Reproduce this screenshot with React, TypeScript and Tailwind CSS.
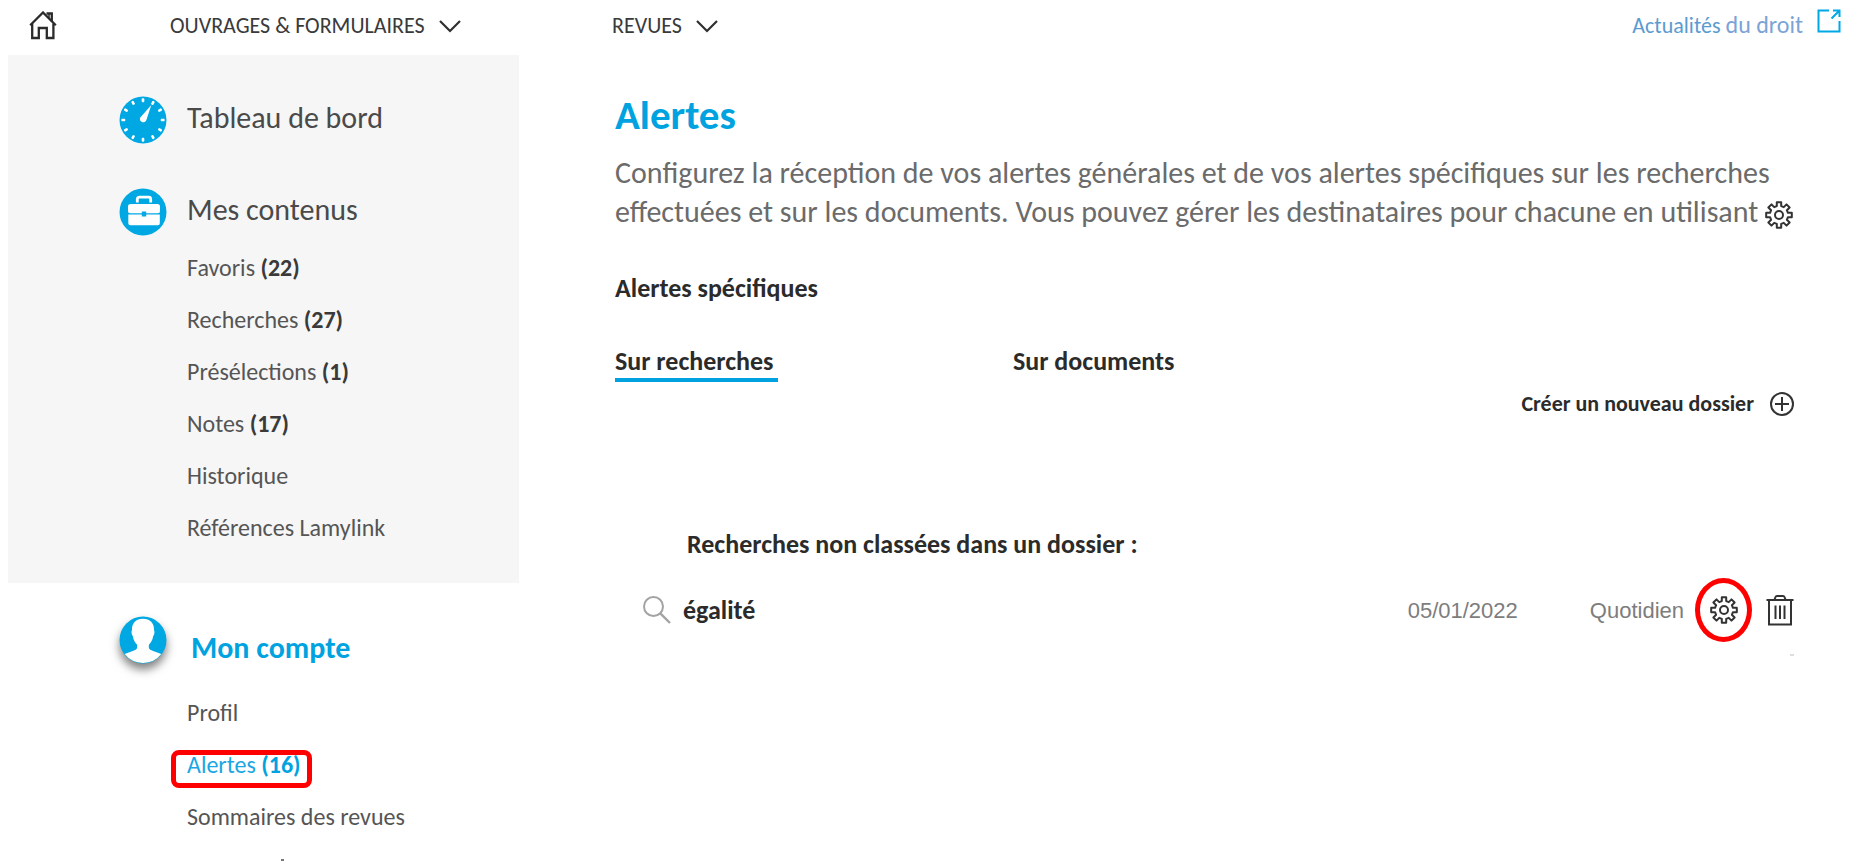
import React from "react";

type Entry = { label: string; count?: number; active?: boolean };

const contents: Entry[] = [
  { label: "Favoris", count: 22 },
  { label: "Recherches", count: 27 },
  { label: "Présélections", count: 1 },
  { label: "Notes", count: 17 },
  { label: "Historique" },
  { label: "Références Lamylink" },
];

const account: Entry[] = [
  { label: "Profil" },
  { label: "Alertes", count: 16, active: true },
  { label: "Sommaires des revues" },
];

/* Outline of an eight-toothed cog centred on 14,14. */
const cogPath =
  Array.from({ length: 8 }, (_, i) => {
    const base = (i * Math.PI) / 4;
    return (
      [
        [9.2, -0.24],
        [13, -0.17],
        [13, 0.17],
        [9.2, 0.24],
      ] as const
    )
      .map(([r, a], k) => {
        const x = 14 + r * Math.sin(base + a);
        const y = 14 - r * Math.cos(base + a);
        return `${i === 0 && k === 0 ? "M" : "L"}${x.toFixed(2)} ${y.toFixed(2)}`;
      })
      .join("");
  }).join("") + "Z";

function Cog({ className = "" }: { className?: string }) {
  return (
    <svg viewBox="0 0 28 28" className={`size-7 ${className}`} fill="none" stroke="#333" strokeWidth="2" strokeLinejoin="round" aria-hidden="true">
      <path d={cogPath} />
      <circle cx="14" cy="14" r="4" />
    </svg>
  );
}

function HomeIcon() {
  return (
    <svg viewBox="0 2 28 30" className="h-[30px] w-7" fill="none" stroke="#2b2b2b" strokeWidth="2.3" aria-hidden="true">
      <path d="M1.2 16.2 14 3.500l12.800 12.700" />
      <path d="M3.200 14.500V29h6.600V19h8v10h6.600V14.500" />
      <path d="M17.500 4.500h5.300v8" />
      <path d="M20 5v5" strokeWidth="1.500" />
    </svg>
  );
}

function Chevron() {
  return (
    <svg viewBox="0 0 22 14" className="h-3.5 w-[22px]" fill="none" stroke="#2f2f2f" strokeWidth="2.200" aria-hidden="true">
      <path d="M1 2l10 10L21 2" />
    </svg>
  );
}

function ExternalIcon() {
  return (
    <svg viewBox="0 0 24 24" className="size-6" fill="none" stroke="#00a8e6" strokeWidth="2" aria-hidden="true">
      <path d="M12 1.500H1.500V22.500h21V12" />
      <path d="M14.500 9.500 22 2M16 1.500h6.500V8" />
    </svg>
  );
}

function DashboardIcon() {
  return (
    <svg viewBox="0 0 48 48" className="size-12" aria-hidden="true">
      <circle cx="24" cy="24" r="23.500" fill="#00a8e3" />
      {Array.from({ length: 12 }, (_, i) => (
        <rect key={i} x="22.700" y="2.300" width="2.600" height="4" rx="1" fill="#fff" transform={`rotate(${i * 30} 24 24)`} />
      ))}
      <path d="M32.300 9 27.300 24.300a3.300 3.300 0 1 1-6-2.800z" fill="#fff" />
    </svg>
  );
}

function BriefcaseIcon() {
  return (
    <svg viewBox="0 0 48 48" className="size-12" aria-hidden="true">
      <circle cx="24" cy="24" r="23.500" fill="#00a8e3" />
      <path d="M18.300 14.500v-3.300a2 2 0 0 1 2-2h9.400a2 2 0 0 1 2 2v3.300" fill="none" stroke="#fff" strokeWidth="2.800" />
      <path d="M11.500 16h27a2.500 2.500 0 0 1 2.500 2.500v4.700a2 2 0 0 1-2 2H27.200v-1.700h-4.400v1.700H11a2 2 0 0 1-2-2v-4.700A2.500 2.500 0 0 1 11.500 16z" fill="#fff" />
      <path d="M9.300 26.400h13.500v2.200h4.400v-2.200h13.600v8.800a2 2 0 0 1-2 2H11.300a2 2 0 0 1-2-2z" fill="#fff" />
    </svg>
  );
}

function AccountIcon() {
  return (
    <svg viewBox="0 0 48 48" className="size-12 drop-shadow-[0_6px_5px_rgba(0,0,0,0.5)]" aria-hidden="true">
      <circle cx="24" cy="24" r="23.500" fill="#00a8e3" />
      <path d="M24 2.800c-7 0-11.300 4.500-11 11.200-.9 1.500-.5 4.600.8 6 .5 4 2.300 6.700 4.200 8.500.5 2.500.2 4.500-1.300 5.300-3.800 1.800-7.600 2.700-11 4.300A23.200 23.200 0 0 0 24 47a23.200 23.200 0 0 0 18.300-8.900c-3.400-1.600-7.200-2.500-11-4.300-1.500-.8-1.800-2.800-1.300-5.300 1.900-1.800 3.700-4.500 4.200-8.500 1.300-1.400 1.700-4.500.8-6 .3-6.700-4-11.200-11-11.200z" fill="#fff" />
    </svg>
  );
}

function SearchIcon() {
  return (
    <svg viewBox="0 0 28 28" className="size-7" fill="none" stroke="#a3a3a3" strokeWidth="2" aria-hidden="true">
      <circle cx="10.500" cy="10.500" r="9.500" />
      <path d="M17.300 17.300 27 27" strokeWidth="2.400" />
    </svg>
  );
}

function PlusCircleIcon() {
  return (
    <svg viewBox="0 0 24 24" className="size-6" fill="none" stroke="#333" strokeWidth="2" aria-hidden="true">
      <circle cx="12" cy="12" r="11" />
      <path d="M12 5v14M5 12h14" />
    </svg>
  );
}

function TrashIcon() {
  return (
    <svg viewBox="0 0 28 32" className="h-8 w-7" fill="none" stroke="#333" strokeWidth="2" aria-hidden="true">
      <path d="M.5 6h27" />
      <path d="M8.500 5.500 9.500 3q.4-1 1.500-1h6q1.100 0 1.500 1l1 2.500" />
      <path d="M3 6v24.500h22V6" />
      <path d="M9.500 11.500V25M14 11.500V25M18.500 11.500V25" strokeWidth="2" />
    </svg>
  );
}

function EntryList({ entries }: { entries: Entry[] }) {
  return (
    <ul className="pl-[68px] text-2xl leading-[52px]">
      {entries.map((e) => (
        <li key={e.label}>
          <a href="#" className={e.active ? "relative inline-block text-[#1aa7e2]" : "inline-block text-[#555]"}>
            {e.label}
            {e.count !== undefined && (
              <>
                {" "}
                <b className={e.active ? "text-[#00a3e0]" : "text-[#3a3a3a]"}>({e.count})</b>
              </>
            )}
            {e.active && (
              <span className="absolute -right-[11px] -left-4 top-[11px] h-[38px] rounded-lg border-[5px] border-[#f00]" />
            )}
          </a>
        </li>
      ))}
    </ul>
  );
}

export default function App() {
  return (
    <div className="bg-white font-[family-name:Carlito,Lato,sans-serif] text-[#2b2b2b]">
      <header className="flex h-[55px] items-center pr-[22px] pb-1 pl-[29px] text-[22px] text-[#3a3a3a]">
        <a href="#" aria-label="Accueil" className="w-[141px] shrink-0">
          <HomeIcon />
        </a>
        <nav className="flex">
          <button type="button" className="flex w-[442px] items-center gap-3.5">
            OUVRAGES &amp; FORMULAIRES
            <Chevron />
          </button>
          <button type="button" className="flex items-center gap-3.5">
            REVUES
            <Chevron />
          </button>
        </nav>
        <a href="#" className="ml-auto flex items-start gap-3.5 leading-8 text-[#5b9bd0]">
          <span>
            Actualités <span className="text-2xl leading-8 text-[#7ba3d6]">du droit</span>
          </span>
          <ExternalIcon />
        </a>
      </header>

      <div className="flex">
        <aside className="ml-2 w-[511px] shrink-0">
          <section className="bg-[#f6f6f6] pt-10 pb-[29px] pl-[111px]">
            <h2 className="flex items-center gap-5 text-[30px] text-[#4a4a4a]">
              <DashboardIcon />
              <a href="#" className="pb-1">
                Tableau de bord
              </a>
            </h2>
            <h2 className="mt-[43px] mb-1.5 flex items-center gap-5 text-[30px] text-[#4a4a4a]">
              <BriefcaseIcon />
              <a href="#" className="pb-1">
                Mes contenus
              </a>
            </h2>
            <EntryList entries={contents} />
          </section>
          <section className="pt-[33px] pl-[111px]">
            <h2 className="mb-[23px] flex items-end gap-6 text-[30px] leading-8 font-bold text-[#00a3e0]">
              <AccountIcon />
              <a href="#">Mon compte</a>
            </h2>
            <EntryList entries={account} />
            <div className="mt-4 pl-[162px]" aria-hidden="true">
              <div className="h-0.5 w-[3px] bg-[#777]" />
            </div>
          </section>
        </aside>

        <main className="ml-24 min-w-0 flex-1 pt-9 pr-16">
          <h1 className="text-[41px] leading-[48px] font-bold text-[#00a3e0]">Alertes</h1>
          <p className="mt-3.5 text-[30px] leading-[39px] text-[#6b6b6b]">
            Configurez la réception de vos alertes générales et de vos alertes spécifiques sur les recherches
            effectuées et sur les documents. Vous pouvez gérer les destinataires pour chacune en utilisant{" "}
            <Cog className="inline" />
          </p>
          <h2 className="mt-[41px] text-[26px] leading-8 font-bold">Alertes spécifiques</h2>

          <div role="tablist" className="mt-[41px] flex text-[26px] leading-8 font-bold">
            <div className="w-[398px]">
              <button type="button" role="tab" aria-selected="true" className="border-b-4 border-[#00a3e0] pr-1 pb-px">
                Sur recherches
              </button>
            </div>
            <button type="button" role="tab" aria-selected="false" className="border-b-4 border-transparent pb-px">
              Sur documents
            </button>
          </div>

          <div className="mt-2.5 flex justify-end pr-[5px]">
            <button type="button" className="flex items-center gap-4 text-[22px] leading-6 font-bold">
              Créer un nouveau dossier
              <PlusCircleIcon />
            </button>
          </div>

          <h3 className="mt-28 pl-[72px] text-[26px] leading-8 font-bold">Recherches non classées dans un dossier :</h3>
          <div className="mt-[18px] flex h-16 items-center pr-[5px] pl-7">
            <SearchIcon />
            <a href="#" className="ml-3 text-[26px] font-bold">
              égalité
            </a>
            <div className="ml-auto flex items-center font-['Liberation_Sans',sans-serif] text-[22px] text-[#7d7d7d]">
              <span>05/01/2022</span>
              <span className="ml-[72px]">Quotidien</span>
              <button
                type="button"
                aria-label="Configurer"
                className="ml-[11px] flex h-16 w-[57px] items-center justify-center rounded-[50%] border-[5px] border-[#f00]"
              >
                <Cog />
              </button>
              <button type="button" aria-label="Supprimer" className="ml-3.5">
                <TrashIcon />
              </button>
            </div>
          </div>
          <div className="mt-3 flex justify-end pr-[5px]">
            <span className="h-0.5 w-1 bg-[#ddd]" />
          </div>
        </main>
      </div>
    </div>
  );
}
